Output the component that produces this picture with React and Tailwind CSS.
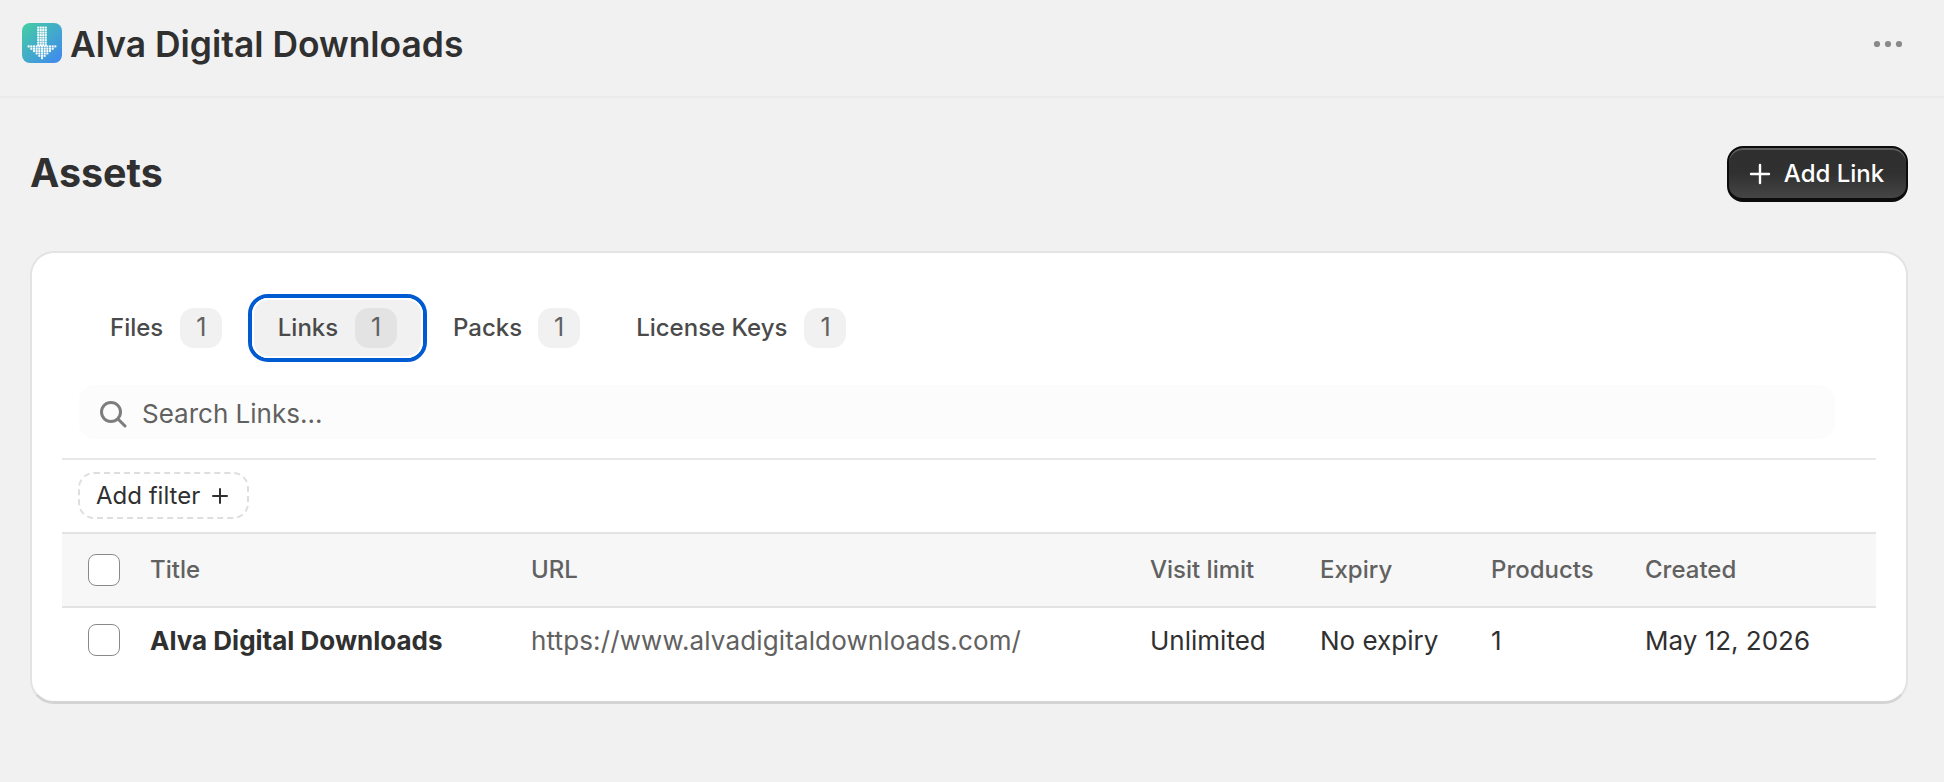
import React from "react";

const font = { fontFamily: "Inter, sans-serif" };

function Logo() {
  const dots = [];
  for (let r = 0; r < 8; r++) {
    for (let c = 0; c < 4; c++) dots.push([20 + (c - 1.5) * 2.5, 4.6 + r * 2.5]);
  }
  [5, 4, 3, 2, 1, 0].forEach((n, i) => {
    for (let c = -n; c <= n; c++) dots.push([20 + c * 2.67, 23.4 + i * 2.35]);
  });
  return (
    <svg width="40" height="40" viewBox="0 0 40 40" className="shrink-0">
      <defs>
        <linearGradient id="lg" x1="0" y1="0" x2="1" y2="1">
          <stop offset="0" stopColor="#45cfa2" />
          <stop offset="1" stopColor="#3f86f2" />
        </linearGradient>
      </defs>
      <rect width="40" height="40" rx="8" fill="url(#lg)" />
      {dots.map(([x, y], i) => (
        <rect key={i} x={x - 1} y={y - 1} width="2" height="2" fill="#fff" />
      ))}
    </svg>
  );
}

function Badge({ active }) {
  return (
    <span
      className={
        "flex items-center justify-center w-[42px] h-[40px] rounded-[14px] text-[25px] text-[#616161] " +
        (active ? "bg-[#e3e3e3]" : "bg-[#f1f1f1]")
      }
    >
      1
    </span>
  );
}

const cols = "grid grid-cols-[443px_619px_170px_171px_154px_1fr] items-center";

export default function App() {
  return (
    <div style={font} className="w-[1944px] h-[782px] bg-[#f1f1f1] overflow-hidden text-[#303030]">
      <header className="h-[98px] flex items-center justify-between pl-[22px] pr-[41px] border-b-2 border-[#ebebeb]">
        <div className="flex items-center gap-[8px] pb-[10px]">
          <Logo />
          <span className="text-[35.4px] font-semibold leading-none text-[#303030] pt-[3px]">Alva Digital Downloads</span>
        </div>
        <svg width="30" height="8" viewBox="0 0 30 8" className="mb-[8px]">
          <circle cx="4" cy="4" r="3.1" fill="#8a8a8a" />
          <circle cx="15" cy="4" r="3.1" fill="#8a8a8a" />
          <circle cx="26" cy="4" r="3.1" fill="#8a8a8a" />
        </svg>
      </header>

      <div className="pl-[30px] pr-[36px]">
        <div className="flex items-center justify-between h-[56px] mt-[48px]">
          <h1 className="text-[39.4px] font-bold leading-none text-[#303030]">Assets</h1>
          <button className="flex items-center gap-[13px] h-[56px] w-[181px] justify-center pt-[2px] pr-[2px] rounded-[16px] border-2 border-[#0c0c0c] border-b-[4px] bg-gradient-to-b from-[#2f2f2f] via-[#303030] to-[#454545] shadow-[inset_0_2px_0_#5c5c5c] text-white text-[24px] font-medium">
            <svg width="22" height="22" viewBox="0 0 22 22">
              <path d="M11 2v18M2 11h18" stroke="#fff" strokeWidth="2.4" strokeLinecap="round" />
            </svg>
            Add Link
          </button>
        </div>

        <section className="mt-[49px] h-[453px] bg-white rounded-[24px] border-2 border-[#e3e3e3] border-b-[3px] border-b-[#d4d4d4] pt-[40px] px-[30px]">
          <div className="flex items-center h-[69px]">
            <div className="flex items-center gap-[17px] w-[186px] pl-[48px]">
              <span className="text-[24px] font-medium text-[#4a4a4a]">Files</span>
              <Badge />
            </div>
            <div className="flex items-center justify-center gap-[17px] h-[68px] w-[179px] rounded-[20px] border-[4px] border-[#005bd3] bg-[#f1f1f1] outline outline-2 outline-offset-[-6px] outline-white">
              <span className="text-[24px] font-medium text-[#4a4a4a]">Links</span>
              <Badge active />
            </div>
            <div className="flex items-center gap-[16px] ml-[26px]">
              <span className="text-[24px] font-medium text-[#4a4a4a]">Packs</span>
              <Badge />
            </div>
            <div className="flex items-center gap-[17px] ml-[56px]">
              <span className="text-[24px] font-medium text-[#4a4a4a]">License Keys</span>
              <Badge />
            </div>
          </div>

          <div className="mt-[23px] ml-[17px] mr-[41px] h-[54px] pt-[3px] rounded-[16px] bg-[#fcfcfc] flex items-center pl-[20px] gap-[15px]">
            <svg width="28" height="28" viewBox="0 0 28 28" fill="none" stroke="#7d7d7d" strokeWidth="3" strokeLinecap="round">
              <circle cx="12" cy="12" r="9.5" />
              <path d="M19 19l7 7" />
            </svg>
            <span className="text-[26px] text-[#616161]">Search Links...</span>
          </div>

          <div className="border-t-2 border-[#e8e8e8] mt-[19px] h-[74px] pl-[16px] pt-[12px]">
            <div className="w-[171px] h-[47px] rounded-[16px] border-2 border-dashed border-[#dedede] flex items-center pl-[16px] gap-[11px] text-[24px] text-[#303030]">
              Add filter
              <svg width="18" height="18" viewBox="0 0 18 18">
                <path d="M9 2v14M2 9h14" stroke="#303030" strokeWidth="2" strokeLinecap="round" />
              </svg>
            </div>
          </div>

          <div className={cols + " h-[76px] bg-[#f7f7f7] border-y-2 border-[#e3e3e3] pl-[26px] text-[24px] font-medium text-[#616161]"}>
            <div className="flex items-center gap-[30px]">
              <span className="block w-[32px] h-[32px] rounded-[8px] border border-[#8a8a8a] bg-white" />
              <span>Title</span>
            </div>
            <span>URL</span>
            <span>Visit limit</span>
            <span>Expiry</span>
            <span>Products</span>
            <span>Created</span>
          </div>

          <div className={cols + " h-[64px] pl-[26px] text-[26px]"}>
            <div className="flex items-center gap-[30px]">
              <span className="block w-[32px] h-[32px] rounded-[8px] border border-[#8a8a8a] bg-white" />
              <span className="font-bold">Alva Digital Downloads</span>
            </div>
            <span className="text-[#616161] tracking-[0.13px]">https://www.alvadigitaldownloads.com/</span>
            <span>Unlimited</span>
            <span>No expiry</span>
            <span>1</span>
            <span>May 12, 2026</span>
          </div>
        </section>
      </div>
    </div>
  );
}
